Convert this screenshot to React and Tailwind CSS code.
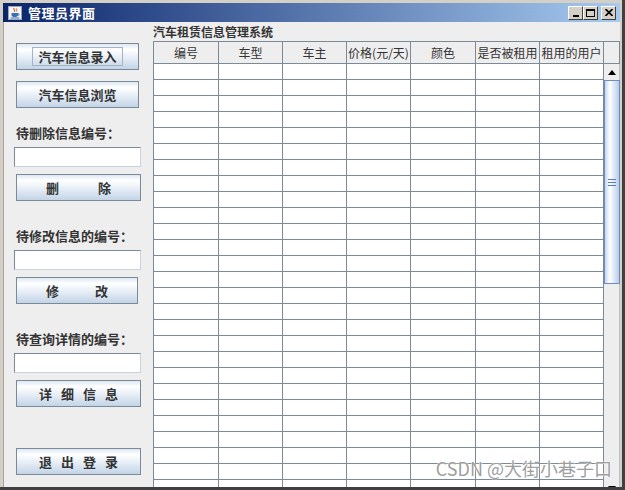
import React from "react";

const cols = [
  { w: "w-[65px]", t: "编号" },
  { w: "w-[64px]", t: "车型" },
  { w: "w-[64px]", t: "车主" },
  { w: "w-[64px]", t: "价格(元/天)" },
  { w: "w-[65px]", t: "颜色" },
  { w: "w-[64px]", t: "是否被租用" },
  { w: "w-[64px]", t: "租用的用户" },
];

const btnCls =
  "flex items-center justify-center h-[27px] ml-[12px] border border-[#7a8a99] bg-[linear-gradient(to_bottom,#dde8f3_0%,#ffffff_22%,#eef3f9_45%,#c3d4e7_100%)] text-[13px] font-bold text-[#333333]";
const labelCls = "ml-[12px] h-[16px] leading-[16px] text-[13px] font-bold text-[#333333] whitespace-nowrap";
const tfCls = "ml-[10px] w-[127px] h-[20px] bg-white border border-[#7a8a99] border-r-[#c8d3de] border-b-[#c8d3de]";

function JavaIcon() {
  return (
    <svg width="14" height="14" viewBox="0 0 14 14">
      <rect x="0.5" y="0.5" width="13" height="13" fill="#f4f4f4" stroke="#9aa6b8" />
      <path d="M6 2 C5 3.5 7.5 4 6.5 6" stroke="#e0661f" strokeWidth="1.2" fill="none" />
      <path d="M8.5 2.5 C7.8 3.6 9.3 4 8.6 5.5" stroke="#e0661f" strokeWidth="1" fill="none" />
      <path d="M3.5 7 H10 V9 C10 10.5 8.5 11 6.8 11 C5 11 3.5 10.5 3.5 9 Z" fill="#3b6fb5" />
      <path d="M10 7.6 C11.6 7.6 11.6 9.4 10 9.4" stroke="#3b6fb5" strokeWidth="0.9" fill="none" />
      <rect x="2.5" y="11.5" width="9" height="1" fill="#3b6fb5" />
    </svg>
  );
}

function WinBtn({ children }) {
  return (
    <div className="w-[15px] h-[14px] bg-[#d4d0c8] border border-t-white border-l-white border-r-[#404040] border-b-[#404040] flex items-center justify-center">
      {children}
    </div>
  );
}

export default function App() {
  const rows = Array.from({ length: 27 });
  return (
    <div className="relative w-[625px] h-[490px] bg-[#d4d0c8] border-r-[3px] border-b-[3px] border-[#404040] pt-[3px] pl-[3px] pr-[2px] pb-[4px] flex flex-col overflow-hidden font-['Noto_Sans_CJK_SC','Liberation_Sans',sans-serif]">
      {/* title bar */}
      <div className="h-[19px] shrink-0 flex items-center bg-[linear-gradient(to_right,#0a246a,#a6caf0)] pl-[5px] pr-[4px]">
        <JavaIcon />
        <div className="ml-[6px] text-white font-bold text-[13px] leading-[19px] tracking-[0.5px]">管理员界面</div>
        <div className="ml-auto flex items-center">
          <WinBtn>
            <div className="w-[6px] h-[2px] bg-black mt-[6px]" />
          </WinBtn>
          <WinBtn>
            <div className="w-[9px] h-[8px] border border-black border-t-2" />
          </WinBtn>
          <div className="w-[3px]" />
          <WinBtn>
            <svg width="8" height="7" viewBox="0 0 8 7">
              <path d="M0.5 0 L7.5 7 M7.5 0 L0.5 7" stroke="black" strokeWidth="1.6" />
            </svg>
          </WinBtn>
        </div>
      </div>

      {/* content */}
      <div className="flex-1 flex bg-[#eeeeee] border-l border-[#a8a49c]">
        {/* left column */}
        <div className="w-[149px] shrink-0 flex flex-col">
          <div className={btnCls + " mt-[21px] w-[123px]"}>
            <div className="w-[91px] h-[19px] border border-[#a3b3c5] flex items-center justify-center">汽车信息录入</div>
          </div>
          <div className={btnCls + " mt-[11px] w-[123px]"}>汽车信息浏览</div>

          <div className={labelCls + " mt-[17px]"}>待删除信息编号：</div>
          <div className={tfCls + " mt-[6px]"} />
          <div className={btnCls + " mt-[7px] w-[125px] gap-[39px]"}>
            <span>删</span>
            <span>除</span>
          </div>

          <div className={labelCls + " mt-[27px]"}>待修改信息的编号：</div>
          <div className={tfCls + " mt-[6px]"} />
          <div className={btnCls + " mt-[7px] w-[122px] gap-[36px]"}>
            <span>修</span>
            <span>改</span>
          </div>

          <div className={labelCls + " mt-[27px]"}>待查询详情的编号：</div>
          <div className={tfCls + " mt-[6px]"} />
          <div className={btnCls + " mt-[7px] w-[125px] gap-[9px]"}>
            <span>详</span>
            <span>细</span>
            <span>信</span>
            <span>息</span>
          </div>

          <div className={btnCls + " mt-[41px] w-[125px] gap-[9px]"}>
            <span>退</span>
            <span>出</span>
            <span>登</span>
            <span>录</span>
          </div>
        </div>

        {/* right block */}
        <div className="w-[467px] shrink-0 flex flex-col">
          <div className="h-[19px] shrink-0 leading-[19px] text-[12px] font-bold text-[#333333] whitespace-nowrap">
            汽车租赁信息管理系统
          </div>
          <div className="flex-1 flex overflow-hidden">
            {/* table */}
            <div className="w-[451px] shrink-0 border-l border-t border-[#7a8a99] flex flex-col overflow-hidden bg-white">
              <div className="flex h-[22px] shrink-0 bg-[#eeeeee]">
                {cols.map((c, i) => (
                  <div
                    key={i}
                    className={c.w + " shrink-0 border-r border-b border-[#7a8a99] flex items-center justify-center text-[12px] text-[#333333] whitespace-nowrap overflow-hidden"}
                  >
                    {c.t}
                  </div>
                ))}
              </div>
              {rows.map((_, r) => (
                <div key={r} className="flex h-[16px] shrink-0">
                  {cols.map((c, i) => (
                    <div key={i} className={c.w + " shrink-0 border-r border-b border-[#7a8a99]"} />
                  ))}
                </div>
              ))}
            </div>
            {/* scrollbar */}
            <div className="w-[16px] shrink-0 flex flex-col bg-[#eeeeee]">
              <div className="h-[23px] shrink-0 border-t border-b border-r border-[#7a8a99] bg-[#eeeeee]" />
              <div className="h-[16px] shrink-0 flex items-center justify-center border-r border-[#b8c4d0] bg-[#eeeeee]">
                <svg width="8" height="5" viewBox="0 0 8 5">
                  <path d="M0 5 L4 0 L8 5 Z" fill="#000" />
                </svg>
              </div>
              <div className="h-[204px] shrink-0 border border-[#6c8cc8] bg-[linear-gradient(to_right,#c6d7eb,#ffffff_35%,#e3ecf6_60%,#b8cde6)] flex flex-col items-center justify-center gap-[2px]">
                <div className="w-[8px] h-[1px] bg-[#5a7bbd]" />
                <div className="w-[8px] h-[1px] bg-[#5a7bbd]" />
                <div className="w-[8px] h-[1px] bg-[#5a7bbd]" />
              </div>
              <div className="flex-1 border-r border-[#b8c4d0]" />
              <div className="h-[16px] shrink-0 flex items-center justify-center border-r border-[#b8c4d0] bg-[#eeeeee]">
                <svg width="8" height="5" viewBox="0 0 8 5">
                  <path d="M0 0 L4 5 L8 0 Z" fill="#000" />
                </svg>
              </div>
            </div>
          </div>
        </div>
      </div>

      {/* watermark */}
      <div className="absolute right-[10px] bottom-[8px] text-[18px] leading-[22px] text-[rgba(140,140,140,0.85)] whitespace-nowrap [text-shadow:0_0_1px_#fff,0_0_2px_#fff] font-['Noto_Sans_CJK_SC','Liberation_Sans',sans-serif]">
        CSDN @大街小巷子口
      </div>
    </div>
  );
}
